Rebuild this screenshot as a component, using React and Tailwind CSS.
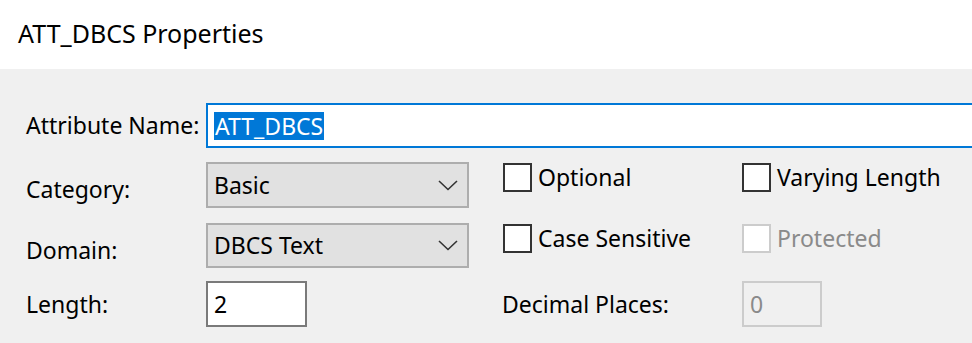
export default function App() {
  const font = { fontFamily: '"Noto Sans", "Open Sans", sans-serif' };
  const Chevron = () => (
    <svg width="20" height="11" viewBox="0 0 20 11" className="shrink-0">
      <path d="M1 1 L10 9.5 L19 1" fill="none" stroke="#333" strokeWidth="1.6" />
    </svg>
  );
  const Check = ({ label, disabled }) => (
    <div className="flex items-center">
      <div
        className={`w-[29px] h-[29px] shrink-0 border-2 bg-white ${disabled ? 'border-[#cccccc]' : 'border-[#333333]'}`}
      />
      <span className={`ml-[6px] whitespace-nowrap text-[23px] leading-none ${disabled ? 'text-[#8a8a8a]' : 'text-black'}`}>{label}</span>
    </div>
  );
  return (
    <div className="w-[972px] h-[343px] overflow-hidden bg-[#f0f0f0] flex flex-col" style={font}>
      <div className="h-[69px] bg-white flex items-center pl-[18px] shrink-0">
        <span className="text-[25px] text-black leading-none -mt-[2px] whitespace-nowrap">ATT_DBCS Properties</span>
      </div>
      <div className="flex flex-col pl-[26px] pt-[34px]">
        <div className="flex items-center h-[45px]">
          <div className="w-[180px] shrink-0 whitespace-nowrap text-[23px] leading-none text-black">Attribute Name:</div>
          <div className="w-[900px] h-[45px] shrink-0 border-2 border-[#0078d7] bg-white flex items-center pl-[6px]">
            <span className="bg-[#0078d7] text-white text-[23px] leading-[28px] h-[28px] px-[1px]">ATT_DBCS</span>
          </div>
        </div>
        <div className="flex items-start mt-[14px]">
          <div className="w-[180px] shrink-0 h-[46px] flex items-center pt-[9px] text-[23px] leading-none text-black">Category:</div>
          <div className="w-[263px] shrink-0 h-[46px] border-2 border-[#adadad] bg-[#e1e1e1] flex items-center justify-between pl-[6px] pr-[9px]">
            <span className="text-[23px] leading-none text-black">Basic</span>
            <Chevron />
          </div>
          <div className="ml-[34px] w-[239px] shrink-0 pt-[1px]"><Check label="Optional" /></div>
          <div className="pt-[1px]"><Check label="Varying Length" /></div>
        </div>
        <div className="flex items-start mt-[15px]">
          <div className="w-[180px] shrink-0 h-[45px] flex items-center pt-[9px] text-[23px] leading-none text-black">Domain:</div>
          <div className="w-[263px] shrink-0 h-[45px] border-2 border-[#adadad] bg-[#e1e1e1] flex items-center justify-between pl-[6px] pr-[9px]">
            <span className="text-[23px] leading-none text-black">DBCS Text</span>
            <Chevron />
          </div>
          <div className="ml-[34px] w-[239px] shrink-0 pt-[1px]"><Check label="Case Sensitive" /></div>
          <div className="pt-[1px]"><Check label="Protected" disabled /></div>
        </div>
        <div className="flex items-center mt-[13px]">
          <div className="w-[180px] shrink-0 text-[23px] leading-none text-black">Length:</div>
          <div className="w-[101px] shrink-0 h-[46px] border-2 border-[#7a7a7a] bg-white flex items-center pl-[6px]">
            <span className="text-[23px] leading-none text-black">2</span>
          </div>
          <div className="ml-[195px] w-[240px] shrink-0 whitespace-nowrap text-[23px] leading-none text-black">Decimal Places:</div>
          <div className="w-[80px] shrink-0 h-[46px] border-2 border-[#cccccc] bg-[#f0f0f0] flex items-center pl-[6px]">
            <span className="text-[23px] leading-none text-[#8a8a8a]">0</span>
          </div>
        </div>
      </div>
    </div>
  );
}
